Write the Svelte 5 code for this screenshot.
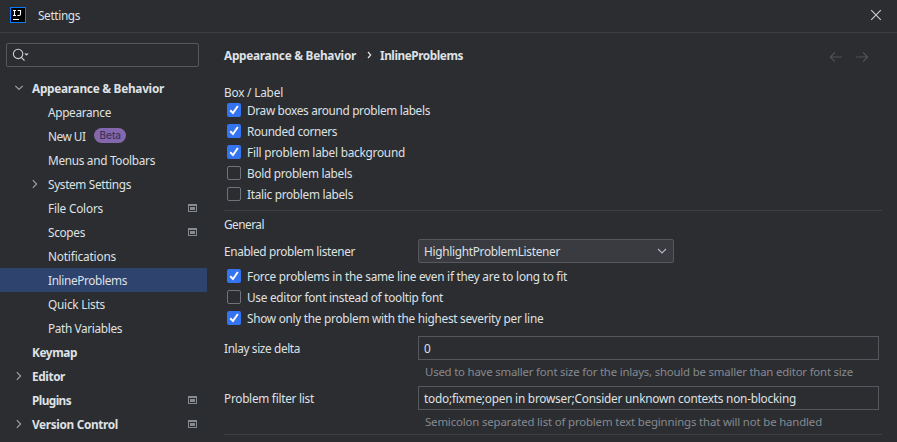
<script>
  const tree = [
    { label: 'Appearance & Behavior', w: 132, bold: true, arrow: 'down' },
    { label: 'Appearance', w: 63, child: true },
    { label: 'New UI', w: 37.5, child: true, beta: true },
    { label: 'Menus and Toolbars', w: 107, child: true },
    { label: 'System Settings', w: 83, child: true, arrow: 'right' },
    { label: 'File Colors', w: 55, child: true, project: true },
    { label: 'Scopes', w: 37, child: true, project: true },
    { label: 'Notifications', w: 68, child: true },
    { label: 'InlineProblems', w: 79, child: true, selected: true },
    { label: 'Quick Lists', w: 57, child: true },
    { label: 'Path Variables', w: 74, child: true },
    { label: 'Keymap', w: 45, bold: true },
    { label: 'Editor', w: 33, bold: true, arrow: 'right' },
    { label: 'Plugins', w: 39, bold: true, project: true },
    { label: 'Version Control', w: 86, bold: true, arrow: 'right', project: true }
  ];
  const boxOptions = [
    { label: 'Draw boxes around problem labels', w: 183, on: true },
    { label: 'Rounded corners', w: 90, on: true },
    { label: 'Fill problem label background', w: 158, on: true },
    { label: 'Bold problem labels', w: 105, on: false },
    { label: 'Italic problem labels', w: 106, on: false }
  ];
  const generalOptions = [
    { label: 'Force problems in the same line even if they are to long to fit', w: 320, on: true },
    { label: 'Use editor font instead of tooltip font', w: 196, on: false },
    { label: 'Show only the problem with the highest severity per line', w: 296.3, on: true }
  ];

  // Tracks a label so that it occupies the given advance width.
  function fit(node, width) {
    const natural = node.getBoundingClientRect().width;
    node.style.letterSpacing = (width - natural) / node.textContent.length + 'px';
  }
</script>

{#snippet checkbox(option)}
  <div class="check">
    <span class="box" class:on={option.on}>
      {#if option.on}
        <svg width="14" height="14" viewBox="0 0 14 14"><path d="M3.2 7.3 6 10l4.8-7" fill="none" stroke="#fff" stroke-width="1.9" /></svg>
      {/if}
    </span>
    <span class="t" use:fit={option.w}>{option.label}</span>
  </div>
{/snippet}

<div class="window">
  <header>
    <svg class="logo" width="16" height="16" viewBox="0 0 16 16">
      <rect width="16" height="16" fill="#087cfa" />
      <rect x="1" y="1" width="14" height="14" fill="#000" />
      <path d="M3 3.5h3M4.5 3.5v5M3 8.5h3M7.7 3.5h2.8v3.6q0 1.4-1.4 1.4H7.4M3 12.5h6" fill="none" stroke="#fff" stroke-width="1.1" />
    </svg>
    <span class="t" use:fit={42}>Settings</span>
    <svg class="close" width="12" height="12" viewBox="0 0 12 12"><path d="m1.2 1.2 9.6 9.6M10.8 1.2l-9.6 9.6" stroke="#ced0d6" stroke-width="1.1" /></svg>
  </header>

  <main>
    <aside>
      <div class="search">
        <svg width="18" height="14" viewBox="0 0 18 14">
          <circle cx="6.1" cy="5.9" r="4.7" fill="none" stroke="#ced0d6" stroke-width="1.1" />
          <path d="m9.4 9.3 3.1 3.3" stroke="#ced0d6" stroke-width="1.2" />
          <path d="M12.2 5.4h4.6L14.5 7.8z" fill="#ced0d6" />
        </svg>
      </div>
      <nav>
        {#each tree as item}
          <div class="row" class:child={item.child} class:bold={item.bold} class:selected={item.selected}>
            <span class="arrow">
              {#if item.arrow === 'down'}
                <svg width="10" height="10" viewBox="0 0 10 10"><path d="m1.3 2.8 3.7 3.7 3.7-3.7" /></svg>
              {:else if item.arrow === 'right'}
                <svg width="10" height="10" viewBox="0 0 10 10"><path d="M2.8 1.2 6.6 5 2.8 8.8" /></svg>
              {/if}
            </span>
            <span class="t" use:fit={item.w}>{item.label}</span>
            {#if item.beta}<span class="beta"><span class="t" use:fit={21.5}>Beta</span></span>{/if}
            {#if item.project}
              <svg class="project" width="9" height="8" viewBox="0 0 9 8">
                <path d="M0 0h9v8H0zM1 2v5h7V2z" fill="#868a91" fill-rule="evenodd" />
                <path d="M2 3h5v3H2z" fill="#868a91" />
              </svg>
            {/if}
          </div>
        {/each}
      </nav>
    </aside>

    <section>
      <div class="crumbs">
        <span class="t" use:fit={132}>Appearance &amp; Behavior</span>
        <svg class="sep" width="5" height="8" viewBox="0 0 5 8"><path d="m1 1 2.7 3L1 7" fill="none" stroke="#dfe1e5" stroke-width="1.2" /></svg>
        <span class="t" use:fit={83}>InlineProblems</span>
        <svg class="history" width="40" height="12" viewBox="0 0 40 12">
          <path d="M13 6H1.5M6 1.3 1.3 6 6 10.7M27 6h11.5M34 1.3 38.7 6 34 10.7" fill="none" stroke="#505257" stroke-width="1.2" />
        </svg>
      </div>

      <div class="heading first"><span class="t" use:fit={59}>Box / Label</span></div>
      {#each boxOptions as option}{@render checkbox(option)}{/each}

      <hr />
      <div class="heading"><span class="t" use:fit={40}>General</span></div>
      <div class="field">
        <div class="label"><span class="t" use:fit={131}>Enabled problem listener</span></div>
        <div class="combo">
          <span class="t" use:fit={136}>HighlightProblemListener</span>
          <svg width="10" height="8" viewBox="0 0 10 8"><path d="m1 2 4 4 4-4" fill="none" stroke="#b4b8bf" stroke-width="1.1" /></svg>
        </div>
      </div>
      <div class="group">
        {#each generalOptions as option}{@render checkbox(option)}{/each}
      </div>

      <div class="field size">
        <div class="label"><span class="t" use:fit={76}>Inlay size delta</span></div>
        <div class="input"><span class="t">0</span></div>
      </div>
      <div class="hint"><span class="t" use:fit={428}>Used to have smaller font size for the inlays, should be smaller than editor font size</span></div>
      <div class="field">
        <div class="label"><span class="t" use:fit={90}>Problem filter list</span></div>
        <div class="input"><span class="t" use:fit={372}>todo;fixme;open in browser;Consider unknown contexts non-blocking</span></div>
      </div>
      <div class="hint"><span class="t" use:fit={397}>Semicolon separated list of problem text beginnings that will not be handled</span></div>
      <hr class="last" />
    </section>
  </main>
</div>

<style>
  .window {
    box-sizing: border-box;
    width: 897px;
    height: 442px;
    overflow: hidden;
    background: #2b2d30;
    color: #dfe1e5;
    font: 11.8px/16px "Noto Sans", "Open Sans", sans-serif;
  }
  .t { white-space: pre; flex: none; }
  svg { flex: none; display: block; }
  header {
    box-sizing: border-box;
    height: 33px;
    border-bottom: 1px solid #3c3e42;
    display: flex;
    align-items: center;
    padding: 0 15px 2px 10px;
  }
  .logo { margin-right: 12px; }
  .close { margin-left: auto; }
  main { display: flex; }
  aside { width: 207px; flex: none; padding-top: 10px; }
  .search {
    box-sizing: border-box;
    width: 193px;
    height: 24px;
    margin: 0 0 9px 6px;
    border: 1px solid #56585d;
    border-radius: 2px;
    display: flex;
    align-items: center;
    padding-left: 5px;
  }
  .row { display: flex; align-items: center; height: 24px; padding: 0 10px 0 14px; }
  .row.child { padding-left: 30px; }
  .arrow { width: 18px; flex: none; }
  .arrow path { fill: none; stroke: #9da0a6; stroke-width: 1.2; }
  .bold, .crumbs { font-weight: 700; }
  .selected { background: #2e436e; }
  .project { margin-left: auto; }
  .beta {
    box-sizing: border-box;
    width: 32px;
    height: 15px;
    margin: -1px 0 0 8.5px;
    border-radius: 8px;
    background: #8468ad;
    color: #40335a;
    font: 500 10px/15px Inter, sans-serif;
    padding-left: 5.5px;
  }
  section { width: 658px; padding: 0 0 0 17px; }
  .crumbs { display: flex; align-items: center; height: 16px; padding-top: 14px; }
  .sep { margin: 0 8px 0 11px; }
  .history { margin: 4px 13px 0 auto; }
  .heading { height: 16px; }
  .heading.first { margin-top: 21px; }
  .check {
    box-sizing: border-box;
    display: flex;
    align-items: center;
    height: 21px;
    padding: 0 0 1px 3px;
  }
  .box {
    box-sizing: border-box;
    width: 14px;
    height: 14px;
    margin-right: 6px;
    border: 1px solid #6f737a;
    border-radius: 2px;
  }
  .box.on { border: 0; background: #3574f0; }
  hr { border: 0; height: 1px; margin: 5px 0; background: #3c3e42; }
  .field { display: flex; align-items: center; height: 24px; }
  .heading + .field { margin-top: 7px; }
  .label { width: 194px; flex: none; }
  .combo, .input {
    box-sizing: border-box;
    display: flex;
    align-items: center;
    height: 24px;
    border: 1px solid #56585d;
    padding-left: 5px;
  }
  .combo {
    width: 256px;
    border-radius: 2px;
    background: #393b40;
    justify-content: space-between;
    padding-right: 6px;
  }
  .input { width: 461px; }
  .group { padding-top: 3px; }
  .size { margin-top: 7px; }
  .hint { height: 22px; padding: 4px 0 0 201px; color: #868a91; font-size: 11.4px; line-height: 15px; }
  hr.last { margin: -2px 0 0; }
</style>
